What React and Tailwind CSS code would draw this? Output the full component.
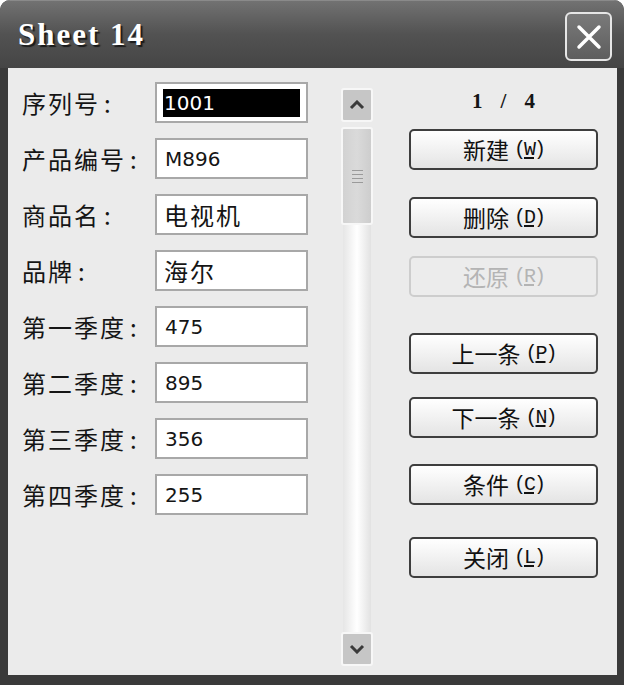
import React from "react";

const CJK = { fontFamily: '"Noto Sans CJK SC", "Noto Sans", sans-serif' };
const MONO = { fontFamily: '"Liberation Mono", "DejaVu Sans Mono", monospace' };
const DIGIT = { fontFamily: '"DejaVu Sans", "Noto Sans CJK SC", sans-serif' };

const rows = [
  ["序列号", "1001", true],
  ["产品编号", "M896"],
  ["商品名", "电视机"],
  ["品牌", "海尔"],
  ["第一季度", "475"],
  ["第二季度", "895"],
  ["第三季度", "356"],
  ["第四季度", "255"],
];

function Btn({ text, k, mt, disabled }) {
  return (
    <div
      className={
        "h-[41px] rounded-[5px] border-2 flex items-center justify-center " +
        mt +
        (disabled
          ? " border-[#cdcdcd] bg-[#ececec] text-[#b4b4b4]"
          : " border-[#3e3e3e] bg-linear-to-b from-white to-[#e4e4e4] text-[#111]")
      }
    >
      <span className="text-[23px] leading-none" style={CJK}>
        {text}
      </span>
      <span className="ml-[5px] text-[20px] leading-none tracking-[-2px]" style={MONO}>
        (<span className="underline underline-offset-2">{k}</span>)
      </span>
    </div>
  );
}

export default function App() {
  return (
    <div className="w-[624px] h-[685px] flex flex-col rounded-t-[10px] overflow-hidden bg-[#3a3a3a]">
      <div className="h-[68px] shrink-0 flex items-center justify-between pl-[18px] pr-[12px] bg-linear-to-b from-[#727272] via-[#525252] to-[#454545] border-t border-[#8a8a8a]">
        <span
          className="text-white text-[31px] font-bold tracking-[2px] mt-[2px] [text-shadow:2px_2px_1px_#1a1a1a]"
          style={{ fontFamily: '"Liberation Serif", serif' }}
        >
          Sheet 14
        </span>
        <div className="w-[47px] h-[49px] mt-[4px] rounded-[6px] border-2 border-[#e6e6e6] bg-linear-to-b from-[#7a7a7a] to-[#5e5e5e] flex items-center justify-center">
          <svg width="28" height="28" viewBox="0 0 28 28">
            <path d="M4 4 L24 24 M24 4 L4 24" stroke="white" strokeWidth="3.5" strokeLinecap="round" />
          </svg>
        </div>
      </div>
      <div className="flex-1 flex border-l-[8px] border-r-[7px] border-b-[10px] border-[#3a3a3a] bg-[#ebebeb]">
        <div className="pl-[14px] pt-[14px] flex flex-col gap-[15px]">
          {rows.map(([label, val, sel]) => (
            <div key={label} className="h-[41px] flex items-center">
              <div className="w-[133px] flex items-center text-[24px] tracking-[2px] text-[#151515]" style={CJK}>
                {label}
                <span className="ml-[4px]">:</span>
              </div>
              <div className="w-[153px] h-[41px] border-2 border-[#a8a8a8] bg-white flex items-center px-[6px]">
                {sel ? (
                  <div className="h-[28px] flex-1 bg-black text-white flex items-center text-[20px] pl-[1px]" style={DIGIT}>
                    {val}
                  </div>
                ) : /[0-9A-Z]/.test(val) ? (
                  <span className="text-[20px] text-[#151515] pl-[2px]" style={DIGIT}>{val}</span>
                ) : (
                  <span className="text-[24px] text-[#151515] pl-[1px] tracking-[2px]" style={CJK}>{val}</span>
                )}
              </div>
            </div>
          ))}
        </div>

        <div className="ml-[33px] w-[32px] pt-[20px] pb-[9px] flex flex-col">
          <div className="h-[34px] rounded-[3px] border-2 border-[#f7f7f7] bg-[#c6c6c6] flex items-center justify-center">
            <svg width="16" height="10" viewBox="0 0 16 10">
              <path d="M2 8 L8 2 L14 8" fill="none" stroke="#3a3a3a" strokeWidth="3" />
            </svg>
          </div>
          <div className="mt-[5px] h-[98px] rounded-[3px] border-2 border-[#f7f7f7] bg-linear-to-r from-[#d2d2d2] via-[#dadada] to-[#cdcdcd] flex flex-col items-center justify-center gap-[3px]">
            <div className="w-[11px] h-[1px] bg-[#9a9a9a]" />
            <div className="w-[11px] h-[1px] bg-[#9a9a9a]" />
            <div className="w-[11px] h-[1px] bg-[#9a9a9a]" />
            <div className="w-[11px] h-[1px] bg-[#9a9a9a]" />
          </div>
          <div className="flex-1 mx-[2px] bg-linear-to-r from-[#e6e6e6] via-white to-[#e2e2e2]" />
          <div className="h-[34px] rounded-[3px] border-2 border-[#f7f7f7] bg-[#c6c6c6] flex items-center justify-center">
            <svg width="16" height="10" viewBox="0 0 16 10">
              <path d="M2 2 L8 8 L14 2" fill="none" stroke="#3a3a3a" strokeWidth="3" />
            </svg>
          </div>
        </div>

        <div className="ml-[36px] w-[189px] pt-[22px] flex flex-col">
          <div className="h-[24px] flex items-center justify-center gap-[18px] text-[21px] font-bold text-[#151515]" style={{ fontFamily: '"Liberation Serif", serif' }}>
            <span>1</span>
            <span>/</span>
            <span>4</span>
          </div>
          <Btn text="新建" k="W" mt="mt-[15px]" />
          <Btn text="删除" k="D" mt="mt-[27px]" />
          <Btn text="还原" k="R" mt="mt-[18px]" disabled />
          <Btn text="上一条" k="P" mt="mt-[36px]" />
          <Btn text="下一条" k="N" mt="mt-[23px]" />
          <Btn text="条件" k="C" mt="mt-[26px]" />
          <Btn text="关闭" k="L" mt="mt-[32px]" />
        </div>
      </div>
    </div>
  );
}
